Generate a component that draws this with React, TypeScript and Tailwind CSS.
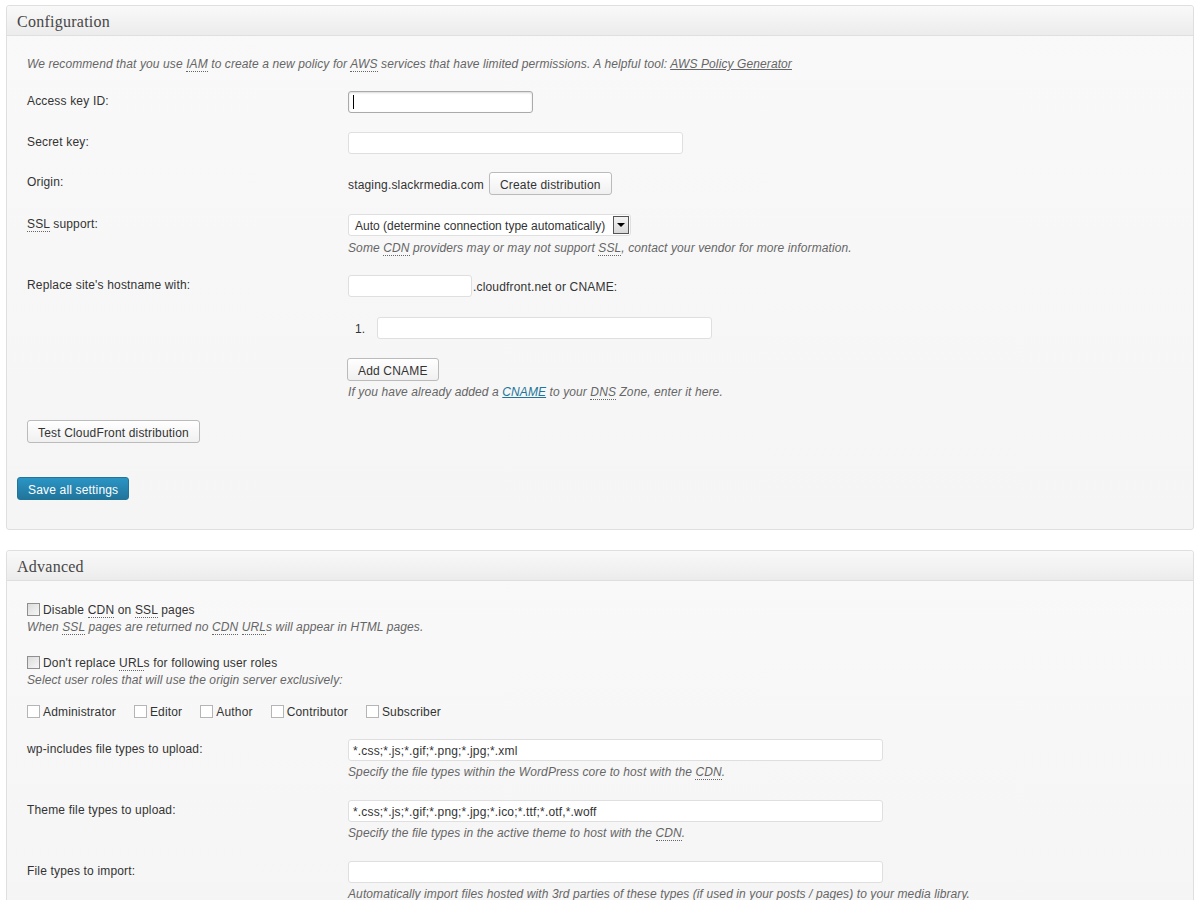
import React from 'react';

const Abbr: React.FC<{ children: React.ReactNode }> = ({ children }) => (
  <span className="border-b border-dotted border-[#666]">{children}</span>
);

const Field: React.FC<{ w: string; value?: string; focused?: boolean }> = ({ w, value, focused }) => (
  <div
    className={`${w} h-[22px] rounded-[3px] bg-white flex items-center px-[4px] text-[12px] text-[#333] ${
      focused ? 'border border-[#aaa] shadow-[inset_0_1px_2px_rgba(0,0,0,0.15)]' : 'border border-[#dfdfdf]'
    }`}
  >
    {focused && <span className="w-px h-[14px] bg-black" />}
    {value && <span className="pt-[2px]">{value}</span>}
  </div>
);

const Button: React.FC<{ children: React.ReactNode }> = ({ children }) => (
  <div className="h-[23px] px-[10px] pt-[2px] inline-flex items-center rounded-[3px] border border-[#bbb] bg-gradient-to-b from-white to-[#f0f0f0] text-[12px] text-[#333] whitespace-nowrap">
    {children}
  </div>
);

const Row: React.FC<{ label: React.ReactNode; mt: string; children: React.ReactNode }> = ({ label, mt, children }) => (
  <div className={`flex ${mt}`}>
    <div className="w-[321px] shrink-0 pt-[2px] leading-4">{label}</div>
    <div className="flex-1">{children}</div>
  </div>
);

const Help: React.FC<{ children: React.ReactNode; mt?: string }> = ({ children, mt = 'mt-[3px]' }) => (
  <p className={`${mt} pt-[1px] italic tracking-[0.1px] text-[#666] leading-4`}>{children}</p>
);

const Check: React.FC<{ grey?: boolean }> = ({ grey }) => (
  <span
    className={`inline-block w-[13px] h-[13px] shrink-0 border ${
      grey ? 'border-[#8f8f8f] bg-gradient-to-br from-[#dcdcdc] to-[#f6f6f6]' : 'border-[#b5b5b5] bg-white'
    }`}
  />
);

const Panel: React.FC<{ title: string; children: React.ReactNode; className?: string }> = ({ title, children, className }) => (
  <div className={`mx-[6px] border border-[#dfdfdf] rounded-[3px] bg-gradient-to-b from-[#f9f9f9] to-[#f5f5f5] ${className ?? ''}`}>
    <div className="h-[30px] flex items-center pt-[2px] px-[10px] border-b border-[#dfdfdf] bg-gradient-to-b from-[#f9f9f9] to-[#ececec] rounded-t-[3px]">
      <h3 className="text-[16px] tracking-[0.25px] text-[#464646] font-['Liberation_Serif',serif]">{title}</h3>
    </div>
    {children}
  </div>
);

export default function App() {
  return (
    <div className="w-[1200px] h-[900px] overflow-hidden bg-white pt-[5px] text-[12px] tracking-[0.17px] text-[#333] font-['Liberation_Sans',Arial,sans-serif]">
      <Panel title="Configuration">
        <div className="px-[20px] pt-[20px] pb-[29px]">
          <p className="italic tracking-[0.1px] text-[#666] leading-4">
            We recommend that you use <Abbr>IAM</Abbr> to create a new policy for <Abbr>AWS</Abbr> services that have limited permissions. A helpful tool:{' '}
            <span className="underline">AWS Policy Generator</span>
          </p>

          <Row label="Access key ID:" mt="mt-[19px]">
            <Field w="w-[185px]" focused />
          </Row>

          <Row label="Secret key:" mt="mt-[19px]">
            <Field w="w-[335px]" />
          </Row>

          <Row label="Origin:" mt="mt-[18px]">
            <div className="flex items-center gap-[5px]">
              <span className="pt-[2px]">staging.slackrmedia.com</span>
              <Button>Create distribution</Button>
            </div>
          </Row>

          <Row label={<><Abbr>SSL</Abbr> support:</>} mt="mt-[19px]">
            <div className="w-[283px] h-[22px] rounded-[3px] border border-[#dfdfdf] bg-white flex items-center justify-between pl-[6px] pr-[1px]">
              <span className="pt-[2px] tracking-normal whitespace-nowrap">Auto (determine connection type automatically)</span>
              <span className="w-[16px] h-[18px] shrink-0 border border-[#555] bg-gradient-to-b from-[#f4f4f4] to-[#d8d8d8] flex items-center justify-center">
                <span className="w-0 h-0 border-l-[4px] border-r-[4px] border-t-[4px] border-l-transparent border-r-transparent border-t-black" />
              </span>
            </div>
            <Help mt="mt-[3px]">
              Some <Abbr>CDN</Abbr> providers may or may not support <Abbr>SSL</Abbr>, contact your vendor for more information.
            </Help>
          </Row>

          <Row label="Replace site's hostname with:" mt="mt-[19px]">
            <div className="flex items-center">
              <Field w="w-[124px]" />
              <span className="ml-[1px] pt-[2px]">.cloudfront.net or CNAME:</span>
            </div>
            <div className="flex items-center mt-[20px]">
              <span className="ml-[7px] w-[22px] pt-[2px]">1.</span>
              <Field w="w-[335px]" />
            </div>
            <div className="mt-[19px] -ml-[1px]">
              <Button>Add CNAME</Button>
            </div>
            <Help mt="mt-[2px]">
              If you have already added a <span className="underline text-[#21759b]">CNAME</span> to your <Abbr>DNS</Abbr> Zone, enter it here.
            </Help>
          </Row>

          <div className="mt-[20px]">
            <Button>Test CloudFront distribution</Button>
          </div>

          <div className="mt-[34px] -ml-[10px]">
            <div className="h-[23px] px-[10px] pt-[2px] inline-flex items-center rounded-[3px] border border-[#21759b] bg-gradient-to-b from-[#2a95c5] to-[#21759b] text-[12px] text-white">
              Save all settings
            </div>
          </div>
        </div>
      </Panel>

      <Panel title="Advanced" className="mt-[20px]">
        <div className="px-[20px] pt-[20px] pb-[20px]">
          <label className="flex items-center gap-[3px] leading-4">
            <Check grey />
            <span className="pt-[1px]">
              Disable <Abbr>CDN</Abbr> on <Abbr>SSL</Abbr> pages
            </span>
          </label>
          <Help mt="mt-0">
            When <Abbr>SSL</Abbr> pages are returned no <Abbr>CDN</Abbr> <Abbr>URL</Abbr>s will appear in HTML pages.
          </Help>

          <label className="flex items-center gap-[3px] leading-4 mt-[19px]">
            <Check grey />
            <span className="pt-[1px]">
              Don't replace <Abbr>URL</Abbr>s for following user roles
            </span>
          </label>
          <Help mt="mt-0">Select user roles that will use the origin server exclusively:</Help>

          <div className="flex items-center mt-[15px] leading-4">
            {['Administrator', 'Editor', 'Author', 'Contributor', 'Subscriber'].map((r) => (
              <label key={r} className="flex items-center gap-[3px] mr-[18px]">
                <Check />
                <span className="pt-[1px]">{r}</span>
              </label>
            ))}
          </div>

          <Row label="wp-includes file types to upload:" mt="mt-[19px]">
            <Field w="w-[535px]" value="*.css;*.js;*.gif;*.png;*.jpg;*.xml" />
            <Help mt="mt-[2px]">
              Specify the file types within the WordPress core to host with the <Abbr>CDN</Abbr>.
            </Help>
          </Row>

          <Row label="Theme file types to upload:" mt="mt-[20px]">
            <Field w="w-[535px]" value="*.css;*.js;*.gif;*.png;*.jpg;*.ico;*.ttf;*.otf,*.woff" />
            <Help mt="mt-[2px]">
              Specify the file types in the active theme to host with the <Abbr>CDN</Abbr>.
            </Help>
          </Row>

          <Row label="File types to import:" mt="mt-[20px]">
            <Field w="w-[535px]" />
            <Help mt="mt-[2px]">Automatically import files hosted with 3rd parties of these types (if used in your posts / pages) to your media library.</Help>
          </Row>
        </div>
      </Panel>
    </div>
  );
}
